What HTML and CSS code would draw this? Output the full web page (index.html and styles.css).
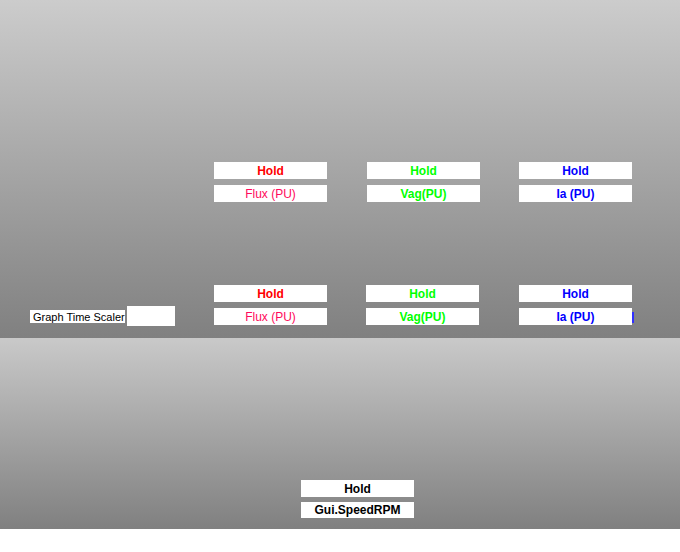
FILE: index.html
```html
<!DOCTYPE html>
<html>
<head>
<meta charset="utf-8">
<link rel="stylesheet" href="styles.css">
</head>
<body>
<section class="panel panel-top">
  <div class="group group-one">
    <div class="col col-a">
      <div class="box hold red">Hold</div>
      <div class="box label pink">Flux (PU)</div>
    </div>
    <div class="col col-b">
      <div class="box hold green">Hold</div>
      <div class="box label bold green">Vag(PU)</div>
    </div>
    <div class="col col-c">
      <div class="box hold blue">Hold</div>
      <div class="box label bold blue">Ia (PU)</div>
    </div>
  </div>
  <div class="group group-two">
    <div class="scaler">
      <div class="scaler-label">Graph Time Scaler</div>
      <div class="scaler-input"></div>
    </div>
    <div class="col col-a2">
      <div class="box hold red">Hold</div>
      <div class="box label pink">Flux (PU)</div>
    </div>
    <div class="col col-b2">
      <div class="box hold green">Hold</div>
      <div class="box label bold green">Vag(PU)</div>
    </div>
    <div class="col col-c2">
      <div class="box hold blue">Hold</div>
      <div class="box label bold blue caret">Ia (PU)</div>
    </div>
  </div>
</section>
<section class="panel panel-bottom">
  <div class="col col-speed">
    <div class="box hold black">Hold</div>
    <div class="box label short bold black">Gui.SpeedRPM</div>
  </div>
</section>
</body>
</html>
```
FILE: styles.css
```css
html, body {
  margin: 0;
  padding: 0;
  background: #ffffff;
}
body {
  width: 680px;
  height: 552px;
  font-family: "Liberation Sans", Arial, sans-serif;
}
.panel {
  box-sizing: border-box;
}
.panel-top {
  height: 338px;
  padding-top: 162px;
  background: linear-gradient(to bottom, #cccccc 0%, #808080 100%);
}
.panel-bottom {
  height: 191px;
  padding-top: 142px;
  background: linear-gradient(to bottom, #c9c9c9 0%, #808080 100%);
}
.group {
  display: flex;
}
.group-one {
  padding-left: 214px;
}
.group-two {
  margin-top: 83px;
  align-items: flex-end;
}
.col {
  display: flex;
  flex-direction: column;
  gap: 6px;
  width: 113px;
}
.col-b { margin-left: 40px; }
.col-c { margin-left: 39px; }
.col-a2 { margin-left: 39px; }
.col-b2 { margin-left: 39px; }
.col-c2 { margin-left: 40px; }
.col-speed {
  margin-left: 301px;
  gap: 5px;
}
.box {
  box-sizing: border-box;
  background: #ffffff;
  height: 17px;
  padding-top: 1px;
  line-height: 16px;
  text-align: center;
  font-size: 12px;
  white-space: nowrap;
}
.box.short {
  height: 16px;
  line-height: 15px;
}
.hold { font-weight: bold; }
.bold { font-weight: bold; }
.red { color: #ff0000; }
.pink { color: #ff0a5a; }
.green { color: #00ff00; }
.blue { color: #0000ff; }
.black { color: #000000; }
.caret {
  position: relative;
}
.caret::after {
  content: "";
  position: absolute;
  left: 113px;
  top: 4px;
  width: 2px;
  height: 11px;
  background: #3030ff;
}
.scaler {
  display: flex;
  align-items: center;
  margin-left: 30px;
  margin-bottom: -1px;
}
.scaler-label {
  background: #ffffff;
  width: 95px;
  height: 13px;
  line-height: 14px;
  font-size: 11px;
  color: #000000;
  padding-left: 3px;
  box-sizing: border-box;
  white-space: nowrap;
}
.scaler-input {
  background: #ffffff;
  width: 48px;
  height: 20px;
  margin-left: 2px;
}
```
